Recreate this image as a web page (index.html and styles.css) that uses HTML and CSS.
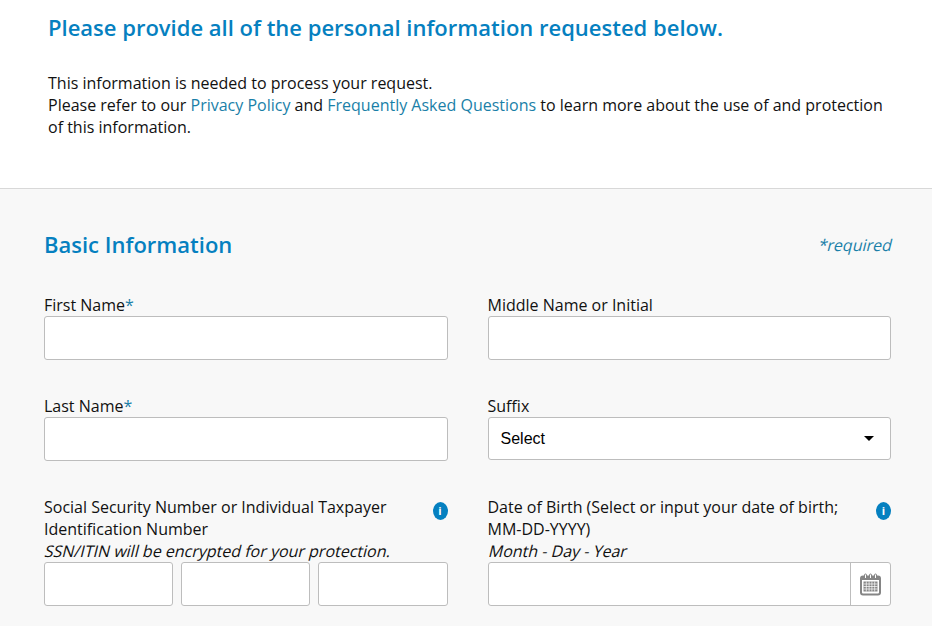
FILE: index.html
```html
<!DOCTYPE html>
<html lang="en">
<head>
<meta charset="utf-8">
<title>Personal Information</title>
<link rel="stylesheet" href="styles.css">
</head>
<body>
<div class="intro">
  <h1>Please provide all of the personal information requested below.</h1>
  <p>This information is needed to process your request.<br>
  Please refer to our <a href="#">Privacy Policy</a> and <a href="#">Frequently Asked Questions</a> to learn more about the use of and protection of this information.</p>
</div>
<div class="formArea">
  <div class="formHead">
    <h2>Basic Information</h2>
    <span class="required">*required</span>
  </div>
  <div class="formGrid">
    <div class="field">
      <label>First Name<span class="star">*</span></label>
      <input class="input" type="text">
    </div>
    <div class="field">
      <label>Middle Name or Initial</label>
      <input class="input" type="text">
    </div>
    <div class="field">
      <label>Last Name<span class="star">*</span></label>
      <input class="input" type="text">
    </div>
    <div class="field">
      <label>Suffix</label>
      <div class="select">
        <span>Select</span>
        <span class="caret"></span>
      </div>
    </div>
    <div class="field">
      <div class="labelRow">
        <label>Social Security Number or Individual Taxpayer Identification Number</label>
        <span class="info">i</span>
      </div>
      <span class="hint">SSN/ITIN will be encrypted for your protection.</span>
      <div class="ssn">
        <input class="input" type="text">
        <input class="input" type="text">
        <input class="input" type="text">
      </div>
    </div>
    <div class="field">
      <div class="labelRow">
        <label>Date of Birth (Select or input your date of birth; MM-DD-YYYY)</label>
        <span class="info">i</span>
      </div>
      <span class="hint">Month - Day - Year</span>
      <div class="dateBox">
        <input type="text">
        <span class="calBtn">
          <svg width="21" height="23" viewBox="0 0 21 23">
            <rect x="1" y="3.5" width="19" height="18" rx="2" fill="#fff" stroke="#858585" stroke-width="2"/>
            <rect x="1" y="3" width="19" height="4" fill="#858585"/>
            <path d="M4.5 5V2a1 1 0 0 1 2 0v3M9.5 5V2a1 1 0 0 1 2 0v3M14.5 5V2a1 1 0 0 1 2 0v3" fill="#fff" stroke="#858585"/>
            <path d="M3.5 8.5h14v10h-14z" fill="#858585"/>
            <path d="M6.3 8.5v10M9.1 8.5v10M11.9 8.5v10M14.7 8.5v10M3.5 11h14M3.5 13.5h14M3.5 16h14" stroke="#fff" stroke-width=".7"/>
          </svg>
        </span>
      </div>
    </div>
  </div>
</div>
</body>
</html>
```

FILE: styles.css
```css
html, body {
  height: 100%;
}
html {
  overflow: hidden;
}
body {
  margin: 0;
  display: flex;
  flex-direction: column;
  font-family: "Open Sans", "Liberation Sans", sans-serif;
  font-size: 16px;
  line-height: 22px;
  color: #111;
  background: #fff;
}
a {
  color: #1a7fa8;
  text-decoration: none;
}

/* top text */
.intro {
  flex: none;
  height: 176px;
  padding: 12px 40px 0 48px;
  border-bottom: 1px solid #d8d8d8;
}
.intro h1 {
  margin: 0 0 30px;
  font-size: 22px;
  line-height: 30px;
  font-weight: 600;
  color: #0580c0;
}
.intro p {
  margin: 0;
}

/* grey form */
.formArea {
  flex: 1;
  background: #f8f8f8;
  padding: 39px 41px 0 44px;
}
.formHead {
  display: flex;
  justify-content: space-between;
  align-items: center;
  margin-right: -1px;
  height: 32px;
}
.formHead h2 {
  margin: 0;
  font-size: 22px;
  line-height: 32px;
  font-weight: 600;
  color: #0580c0;
}
/* the slanted text is upright Open Sans leaned over, it keeps the upright width */
.required {
  display: block;
  margin-top: 2px;
  transform: skewX(-14deg);
  color: #1a7fa8;
}
.formGrid {
  display: grid;
  grid-template-columns: 1fr 1fr;
  column-gap: 40px;
  row-gap: 35px;
  margin-top: 34px;
}
.field {
  display: flex;
  flex-direction: column;
  min-width: 0;
}
.star {
  color: #1a7fa8;
}
.input {
  box-sizing: border-box;
  display: block;
  width: 100%;
  height: 44px;
  padding: 0 12px;
  background: #fff;
  border: 1px solid #bdbdbd;
  border-radius: 3px;
}
.select {
  box-sizing: border-box;
  display: flex;
  justify-content: space-between;
  align-items: center;
  height: 43px;
  padding: 0 16px 0 12px;
  background: #fff;
  border: 1px solid #bdbdbd;
  border-radius: 3px;
  font-family: "Liberation Sans", sans-serif;
  color: #000;
}
.caret {
  width: 0;
  height: 0;
  border-left: 5px solid transparent;
  border-right: 5px solid transparent;
  border-top: 5px solid #000;
}
.labelRow {
  display: flex;
  justify-content: space-between;
  align-items: flex-start;
}
.labelRow label {
  width: 360px;
}
.info {
  flex: none;
  width: 15px;
  height: 18px;
  margin-top: 6px;
  border-radius: 50%;
  background: #0580c0;
  color: #fff;
  font-size: 11px;
  font-weight: 700;
  line-height: 18px;
  text-align: center;
}
.hint {
  display: block;
  transform: skewX(-14deg);
  transform-origin: left 16px;
}
.ssn {
  display: grid;
  grid-template-columns: 1fr 1fr 1fr;
  column-gap: 8px;
}
.dateBox {
  box-sizing: border-box;
  display: flex;
  height: 44px;
  background: #fff;
  border: 1px solid #bdbdbd;
  border-radius: 3px;
}
.dateBox input {
  flex: 1;
  min-width: 0;
  border: 0;
  background: transparent;
  outline: none;
}
.calBtn {
  flex: none;
  width: 39px;
  display: flex;
  align-items: center;
  justify-content: center;
  border-left: 1px solid #bdbdbd;
}
```
